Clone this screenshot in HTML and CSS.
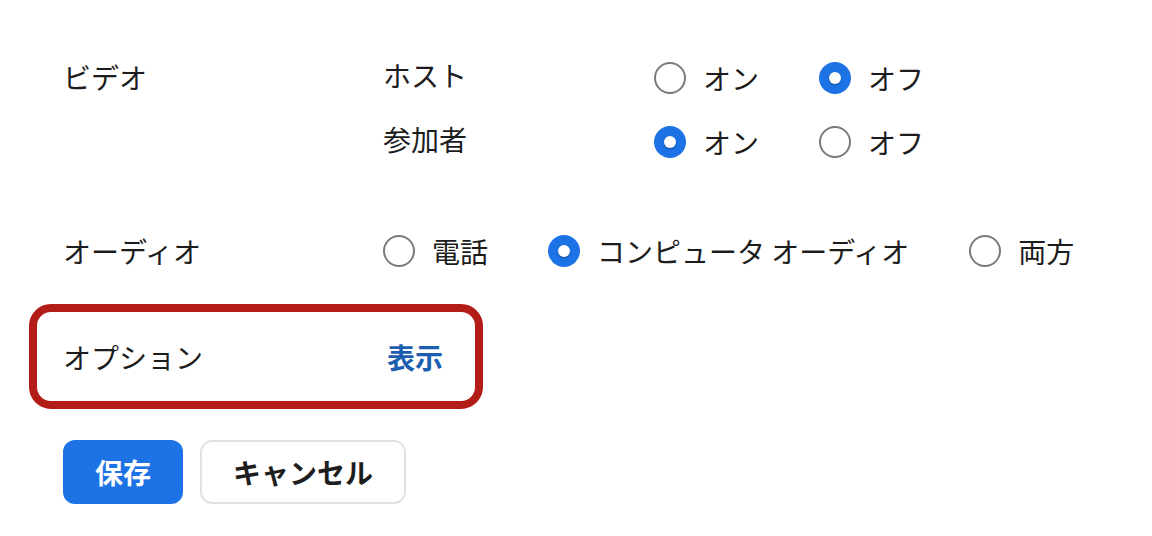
FILE: index.html
```html
<!DOCTYPE html>
<html lang="ja">
<head>
<meta charset="utf-8">
<title>設定</title>
<link rel="stylesheet" href="styles.css">
</head>
<body>
<div class="form">
  <div class="section video">
    <div class="label">ビデオ</div>
    <div class="sub-rows">
      <div class="sub-row">
        <div class="sub-label host">ホスト</div>
        <div class="options">
          <label class="option"><input type="radio" name="host"><span>オン</span></label>
          <label class="option"><input type="radio" name="host" checked><span>オフ</span></label>
        </div>
      </div>
      <div class="sub-row">
        <div class="sub-label host">参加者</div>
        <div class="options">
          <label class="option"><input type="radio" name="part" checked><span>オン</span></label>
          <label class="option"><input type="radio" name="part"><span>オフ</span></label>
        </div>
      </div>
    </div>
  </div>
  <div class="section audio">
    <div class="label">オーディオ</div>
    <div class="options">
      <label class="option"><input type="radio" name="audio"><span>電話</span></label>
      <label class="option"><input type="radio" name="audio" checked><span>コンピュータ オーディオ</span></label>
      <label class="option"><input type="radio" name="audio"><span>両方</span></label>
    </div>
  </div>
  <div class="highlight">
    <div class="opt-label">オプション</div>
    <a class="show-link" href="#">表示</a>
  </div>
  <div class="buttons">
    <button class="btn primary">保存</button>
    <button class="btn secondary">キャンセル</button>
  </div>
</div>
</body>
</html>
```
FILE: styles.css
```css
* { box-sizing: border-box; }
html, body { margin: 0; padding: 0; background: #fff; }
body {
  font-family: "Noto Sans CJK JP", "Noto Sans", sans-serif;
  font-size: 28px;
  color: #1c1c1c;
}
.form {
  padding: 46px 0 0 63px;
}
.section { display: flex; }
.label { width: 320px; }
.video .label { padding-top: 11px; }
.sub-rows { display: flex; flex-direction: column; }
.sub-row { display: flex; align-items: center; height: 64px; }
.sub-label { width: 271px; margin-top: -6px; }
.options { display: flex; gap: 60px; }
.option { display: flex; align-items: center; gap: 17px; cursor: pointer; }
.option input {
  appearance: none;
  -webkit-appearance: none;
  margin: 0;
  width: 32px;
  height: 32px;
  border-radius: 50%;
  border: 2px solid #7a7a7a;
  background: #fff;
  position: relative;
  flex: none;
}
.option input:checked {
  border: none;
  background: #1d73e5;
}
.option input:checked::after {
  content: "";
  position: absolute;
  left: 10px;
  top: 10px;
  width: 12px;
  height: 12px;
  border-radius: 50%;
  background: #fff;
  box-shadow: 0 1px 2px rgba(0,0,0,0.35);
}
.audio { margin-top: 45px; height: 64px; align-items: center; }
.highlight {
  margin: 21px 0 0 -34px;
  width: 454px;
  height: 105px;
  border: 8px solid #b21e17;
  border-radius: 22px;
  display: flex;
  align-items: center;
  padding: 0 0 0 26px;
}
.opt-label { width: 324px; }
.show-link {
  color: #1b5dae;
  text-decoration: none;
  font-weight: 700;
}
.buttons {
  margin-top: 31px;
  display: flex;
  gap: 17px;
}
.btn {
  font-family: inherit;
  font-size: 28px;
  font-weight: 700;
  height: 64px;
  border-radius: 12px;
  cursor: pointer;
  padding: 0;
}
.primary {
  width: 120px;
  background: #1d73e5;
  color: #fff;
  border: none;
}
.secondary {
  width: 206px;
  background: #fff;
  color: #1e1e1e;
  border: 2px solid #e2e2e2;
}
```
